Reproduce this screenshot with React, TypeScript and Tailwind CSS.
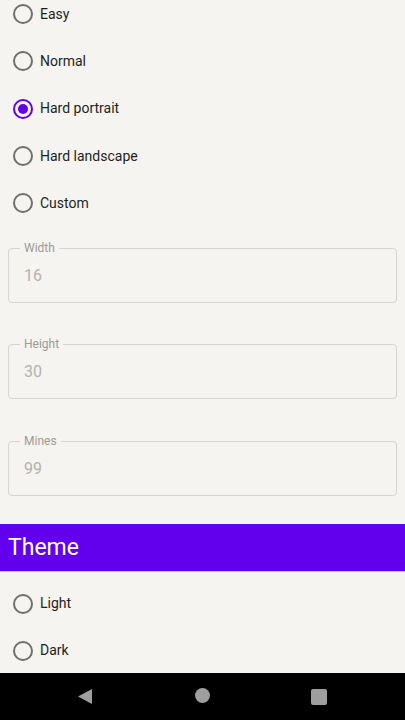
import React, { useState } from "react";

const font = { fontFamily: "Roboto, 'Noto Sans', sans-serif" };

function Radio({ label, checked, onClick }: { label: string; checked?: boolean; onClick?: () => void }) {
  return (
    <div className="flex h-[47.3px] items-center pl-[13px]" onClick={onClick}>
      <span
        className={
          "flex h-[20px] w-[20px] items-center justify-center rounded-full border-2 " +
          (checked ? "border-[#6200ee]" : "border-[#6f6f6f]")
        }
      >
        {checked && <span className="h-[10px] w-[10px] rounded-full bg-[#6200ee]" />}
      </span>
      <span className="ml-[7px] text-[14px] text-[#1f1f1f]">{label}</span>
    </div>
  );
}

function Field({ label, value }: { label: string; value: string }) {
  return (
    <div className="relative mx-[8px] h-[55px] rounded-[4px] border border-[#d6d5d1]">
      <span className="absolute -top-[8px] left-[11px] bg-[#f5f4f0] px-[4px] text-[12px] leading-[14px] text-[#9b9a97]">
        {label}
      </span>
      <div className="pl-[15px] pt-[17px] text-[16px] leading-[20px] text-[#b3b2ae]">{value}</div>
    </div>
  );
}

export default function App() {
  const [difficulty, setDifficulty] = useState("Hard portrait");
  const [theme, setTheme] = useState("");

  return (
    <div className="flex h-[720px] w-[405px] flex-col overflow-hidden bg-[#f5f4f0]" style={font}>
      <div className="flex-1 overflow-hidden">
        <div className="-mt-[9.5px]">
          {["Easy", "Normal", "Hard portrait", "Hard landscape", "Custom"].map((d) => (
            <Radio key={d} label={d} checked={difficulty === d} onClick={() => setDifficulty(d)} />
          ))}
        </div>
        <div className="mt-[21px] flex flex-col gap-[41.5px]">
          <Field label="Width" value="16" />
          <Field label="Height" value="30" />
          <Field label="Mines" value="99" />
        </div>
        <div className="mt-[28px] flex h-[48px] items-center border-b border-[#c9b8f3] bg-[#6200ee] pl-[8px] pt-[1px] text-[23px] text-white">
          Theme
        </div>
        <div className="mt-[8px]">
          {["Light", "Dark"].map((t) => (
            <Radio key={t} label={t} checked={theme === t} onClick={() => setTheme(t)} />
          ))}
        </div>
      </div>
      <div className="flex h-[47px] items-center bg-black">
        <div className="relative h-full w-full">
          <svg className="absolute left-[77px] top-[15px]" width="16" height="17" viewBox="0 0 16 17">
            <path d="M15 1 L15 16 L1 8.5 Z" fill="#9e9e9e" />
          </svg>
          <span className="absolute left-[195px] top-[15px] h-[15px] w-[15px] rounded-full bg-[#9e9e9e]" />
          <span className="absolute left-[311px] top-[16px] h-[16px] w-[16px] rounded-[2px] bg-[#9e9e9e]" />
        </div>
      </div>
    </div>
  );
}
